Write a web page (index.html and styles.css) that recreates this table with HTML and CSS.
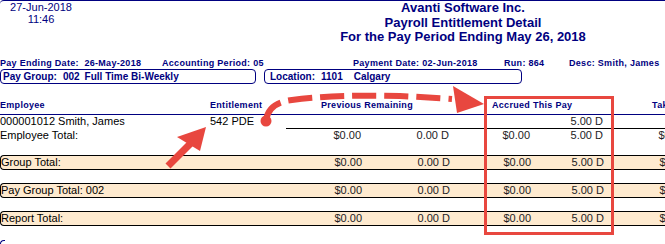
FILE: index.html
```html
<!DOCTYPE html>
<html>
<head>
<meta charset="utf-8">
<link rel="stylesheet" href="styles.css">
</head>
<body>
<div class="page">
  <header class="top">
    <div class="stamp"><div>27-Jun-2018</div><div>11:46</div></div>
    <div class="title">
      <div>Avanti Software Inc.</div>
      <div>Payroll Entitlement Detail</div>
      <div>For the Pay Period Ending May 26, 2018</div>
    </div>
  </header>

  <div class="meta">
    <span>Pay Ending Date:&nbsp; 26-May-2018</span>
    <span>Accounting Period: 05</span>
    <span>Payment Date: 02-Jun-2018</span>
    <span>Run: 864</span>
    <span>Desc: Smith, James</span>
  </div>

  <div class="boxes">
    <div class="box box-group">
      <span>Pay Group:</span><span class="gap-a">002</span><span class="gap-b">Full Time Bi-Weekly</span>
    </div>
    <div class="box box-loc">
      <span>Location:</span><span class="gap-c">1101</span><span class="gap-l">Calgary</span>
    </div>
  </div>

  <div class="colhead">
    <span>Employee</span>
    <span>Entitlement</span>
    <span>Previous Remaining</span>
    <span>Accrued This Pay</span>
    <span>Taken This Pay</span>
  </div>

  <div class="row">
    <span>000001012 Smith, James</span>
    <span>542 PDE</span>
    <span class="amt ul"></span>
    <span class="amt ul"></span>
    <span class="amt ul"></span>
    <span class="amt ul">5.00 D</span>
    <span class="amt ul"></span>
  </div>

  <div class="row">
    <span>Employee Total:</span>
    <span></span>
    <span class="amt">$0.00</span>
    <span class="amt">0.00 D</span>
    <span class="amt">$0.00</span>
    <span class="amt">5.00 D</span>
    <span class="amt">$0.00</span>
  </div>

  <div class="row band">
    <span>Group Total:</span>
    <span></span>
    <span class="amt">$0.00</span>
    <span class="amt">0.00 D</span>
    <span class="amt">$0.00</span>
    <span class="amt">5.00 D</span>
    <span class="amt">$0.00</span>
  </div>

  <div class="row band">
    <span class="wide">Pay Group Total: 002</span>
    <span class="amt">$0.00</span>
    <span class="amt">0.00 D</span>
    <span class="amt">$0.00</span>
    <span class="amt">5.00 D</span>
    <span class="amt">$0.00</span>
  </div>

  <div class="row band">
    <span>Report Total:</span>
    <span></span>
    <span class="amt">$0.00</span>
    <span class="amt">0.00 D</span>
    <span class="amt">$0.00</span>
    <span class="amt">5.00 D</span>
    <span class="amt">$0.00</span>
  </div>

  <div class="end-corner"></div>

  <svg class="marks" width="665" height="244" viewBox="0 0 665 244">
    <rect x="485.5" y="97.5" width="127" height="136" fill="none" stroke="#e8473f" stroke-width="3"/>
    <circle cx="266" cy="121" r="5.5" fill="#e8473f"/>
    <path d="M266 120 C268 108 276 102 292 100 C320 96 360 95 400 96 C420 97 440 98 452 99" fill="none" stroke="#e8473f" stroke-width="6" stroke-dasharray="24 8"/>
    <polygon points="453,86 484,104 457,113" fill="#e8473f"/>
    <line x1="168" y1="166" x2="192" y2="142" stroke="#e8473f" stroke-width="7"/>
    <polygon points="177,137 206,127 200,151" fill="#e8473f"/>
  </svg>
</div>
</body>
</html>
```

FILE: styles.css
```css
html, body {
  margin: 0;
  padding: 0;
  background: #fff;
  overflow: hidden;
}

.page {
  position: relative;
  width: 665px;
  height: 244px;
  overflow: hidden;
  font-family: "Liberation Sans", Arial, sans-serif;
  color: #000;
}

.top {
  display: grid;
  grid-template-columns: 261px 1fr;
  height: 56px;
  border-top: 1px solid #000080;
  border-top-left-radius: 4px;
  color: #000080;
}

.stamp {
  width: 62px;
  margin-left: 10px;
  text-align: center;
  font-size: 11px;
  line-height: 12px;
}

.title {
  text-align: center;
  font-weight: bold;
  font-size: 13px;
  line-height: 14.5px;
}

.meta {
  display: grid;
  grid-template-columns: 162px 191px 151px 65px 1fr;
  height: 12px;
  font-size: 9px;
  line-height: 12px;
  font-weight: bold;
  letter-spacing: 0.3px;
  color: #000080;
  white-space: nowrap;
}

.boxes {
  display: flex;
  gap: 8px;
  height: 15px;
}

.box {
  box-sizing: border-box;
  display: flex;
  height: 15px;
  border: 1px solid #000080;
  border-radius: 4px;
  font-size: 10px;
  line-height: 13px;
  font-weight: bold;
  color: #000080;
  white-space: nowrap;
}

.box-group {
  width: 256px;
  padding-left: 2px;
}

.box-loc {
  width: 258px;
  padding-left: 5px;
}

.gap-a {
  margin-left: 6px;
}

.gap-b {
  margin-left: 5px;
}

.gap-c {
  margin-left: 6px;
}

.gap-l {
  margin-left: 11px;
}

.colhead {
  display: grid;
  grid-template-columns: 210px 111px 171px 160px 1fr;
  margin-top: 16px;
  padding-bottom: 3px;
  border-bottom: 1px solid #000080;
  font-size: 9px;
  line-height: 11px;
  font-weight: bold;
  letter-spacing: 0.3px;
  color: #000080;
  white-space: nowrap;
}

.row {
  display: grid;
  grid-template-columns: 210px 76px 75px 88px 81px 73px 83px;
  width: 686px;
  font-size: 11px;
  line-height: 13px;
  white-space: nowrap;
}

.amt {
  text-align: right;
  color: #1c1c24;
}

.ul {
  border-bottom: 1px solid #000;
}

.band {
  margin-top: 13px;
  background: #feeacf;
  border-top: 1px solid #000;
  border-bottom: 1px solid #000;
  border-left: 1px solid #000;
  border-radius: 4px 0 0 4px;
}

.wide {
  grid-column: span 2;
}

.end-corner {
  margin-top: 14px;
  width: 4px;
  height: 6px;
  border-left: 1px solid #000080;
  border-top: 1px solid #000080;
  border-top-left-radius: 4px;
}

.marks {
  position: absolute;
  top: 0;
  left: 0;
  pointer-events: none;
}
```
